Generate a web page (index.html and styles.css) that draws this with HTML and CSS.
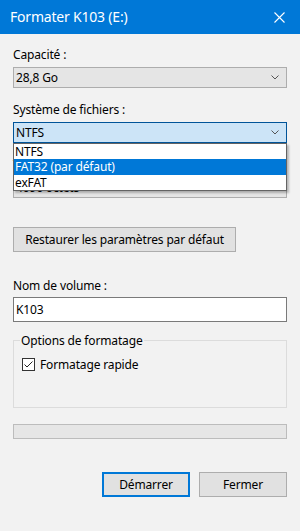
FILE: index.html
```html
<!DOCTYPE html>
<html>
<head>
  <title>Formater K103 (E:)</title>
  <link rel="stylesheet" href="styles.css">
</head>
<body>
  <div class="titlebar">
    <span class="title">Formater K103 (E:)</span>
    <svg class="close" width="11" height="11" viewBox="0 0 11 11">
      <path d="M0.5 0.5 L10.5 10.5 M10.5 0.5 L0.5 10.5" stroke="#fff" stroke-width="1.1" fill="none"/>
    </svg>
  </div>

  <div class="content">
    <div class="label first">Capacité :</div>
    <div class="combo">
      <span>28,8 Go</span>
      <svg class="chevron" width="8" height="5" viewBox="0 0 8 5"><path d="M0.5 0.5 L4 4 L7.5 0.5" stroke="#555" fill="none"/></svg>
    </div>

    <div class="label">Système de fichiers :</div>
    <div class="combo-wrap">
      <div class="combo open">
        <span>NTFS</span>
        <svg class="chevron" width="8" height="5" viewBox="0 0 8 5"><path d="M0.5 0.5 L4 4 L7.5 0.5" stroke="#555" fill="none"/></svg>
      </div>
      <!-- open list lies over the next field -->
      <ul class="dropdown">
        <li>NTFS</li>
        <li class="selected">FAT32 (par défaut)</li>
        <li>exFAT</li>
      </ul>
    </div>

    <div class="label">Taille d'unité d'allocation :</div>
    <div class="combo">
      <span>4096 octets</span>
    </div>

    <button class="btn restore">Restaurer les paramètres par défaut</button>

    <div class="label volume">Nom de volume :</div>
    <div class="textbox">K103</div>

    <fieldset class="group">
      <legend>Options de formatage</legend>
      <label class="check">
        <svg width="13" height="13" viewBox="0 0 13 13">
          <rect x="0.5" y="0.5" width="12" height="12" fill="#fff" stroke="#333"/>
          <path d="M2.5 6.5 L5 9 L10.5 3.5" stroke="#222" stroke-width="1" fill="none"/>
        </svg>
        <span>Formatage rapide</span>
      </label>
    </fieldset>

    <div class="progress"></div>

    <div class="actions">
      <button class="btn default">Démarrer</button>
      <button class="btn">Fermer</button>
    </div>
  </div>
</body>
</html>
```

FILE: styles.css
```css
body {
  margin: 0;
  background-color: #f2f2f2;
  color: #000;
  font-family: "Noto Sans", sans-serif;
  font-size: 12px;
  letter-spacing: -0.15px;
  width: 300px;
  height: 531px;
  overflow: hidden;
}

.titlebar {
  height: 34px;
  background-color: #0078d7;
  color: #fff;
  display: flex;
  align-items: center;
  justify-content: space-between;
  padding: 0 15px 0 10px;
}

.title {
  font-size: 14px;
  letter-spacing: -0.2px;
  margin-top: -1px;
}

.content {
  padding: 0 13px;
}

.label {
  height: 15px;
  line-height: 15px;
  margin-top: 14px;
  margin-bottom: 5px;
}

.label.first {
  margin-top: 13px;
}

.combo {
  height: 21px;
  box-sizing: border-box;
  border: 1px solid #adadad;
  background-color: #e5e5e5;
  display: flex;
  align-items: center;
  justify-content: space-between;
  padding: 0 7px 0 2px;
}

.combo.open {
  background-color: #cce4f7;
  border-color: #005499;
}

.combo-wrap {
  position: relative;
}

.dropdown {
  position: absolute;
  top: 21px;
  left: 0;
  right: 0;
  margin: 0;
  padding: 0;
  list-style: none;
  background-color: #fff;
  border: 1px solid #646464;
  box-shadow: 2px 2px 2px rgba(0, 0, 0, 0.25);
  z-index: 2;
}

.dropdown li {
  height: 15px;
  line-height: 15px;
  padding-left: 1px;
}

.dropdown li.selected {
  height: 16px;
  background-color: #0078d7;
  color: #fff;
}

.btn {
  font-family: "Noto Sans", sans-serif;
  font-size: 12px;
  letter-spacing: -0.15px;
  color: #000;
  height: 25px;
  background-color: #e1e1e1;
  border: 1px solid #adadad;
  padding: 0;
}

.restore {
  display: block;
  width: 223px;
  margin-top: 29px;
}

.label.volume {
  margin-top: 26px;
  margin-bottom: 4px;
}

.textbox {
  height: 25px;
  box-sizing: border-box;
  border: 1px solid #7a7a7a;
  background-color: #fff;
  line-height: 23px;
  padding-left: 2px;
}

.group {
  box-sizing: border-box;
  margin: 11px 0 0;
  padding: 0 0 0 8px;
  height: 75px;
  border: 1px solid #dcdcdc;
}

.group legend {
  padding: 0 1px;
  margin-left: -2px;
  line-height: 15px;
}

.check {
  display: flex;
  align-items: center;
  gap: 5px;
  margin-top: 8px;
}

.check svg {
  display: block;
}

.progress {
  height: 15px;
  margin-top: 16px;
  box-sizing: border-box;
  border: 1px solid #bcbcbc;
  background-color: #e6e6e6;
}

.actions {
  display: flex;
  justify-content: flex-end;
  gap: 9px;
  margin-top: 33px;
}

.actions .btn {
  width: 88px;
}

.btn.default {
  border-color: #0078d7;
  box-shadow: inset 0 0 0 1px #0078d7;
}
```
